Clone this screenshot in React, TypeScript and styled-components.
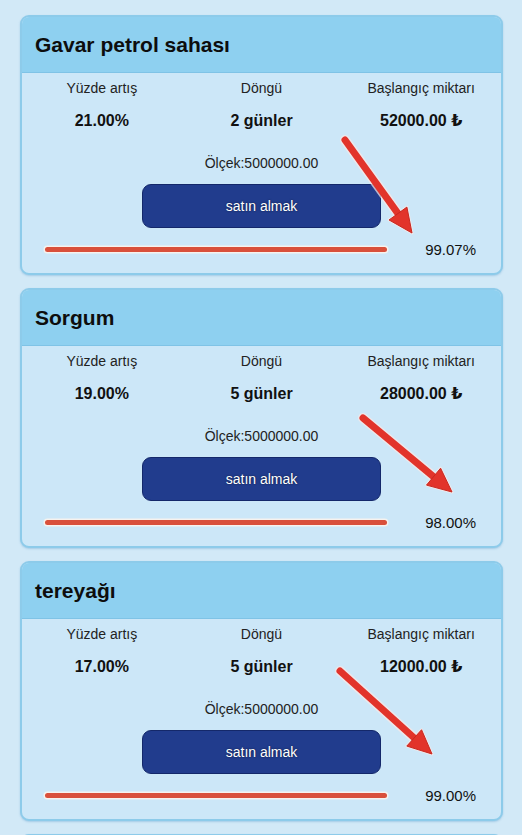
import React from "react";
import styled, { createGlobalStyle } from "styled-components";

const Global = createGlobalStyle`
  html, body { margin: 0; padding: 0; background: #d2e9f7; }
  body { font-family: "Liberation Sans", Arial, "DejaVu Sans", sans-serif; color: #111; }
`;

const Page = styled.div`
  display: flex;
  flex-direction: column;
  gap: 13px;
  padding: 15px 19px 0 20px;
  height: 835px;
  overflow: hidden;
  box-sizing: border-box;
`;

const Card = styled.section`
  position: relative;
  flex: none;
  border: 2px solid #8dcbea;
  border-radius: 9px;
  background: #cce7f8;
  overflow: hidden;
  box-shadow: 0 1px 2px rgba(80, 150, 200, 0.35);
`;

const Header = styled.header`
  height: 55px;
  display: flex;
  align-items: center;
  padding-left: 13px;
  background: #8ed0f0;
  border-bottom: 1px solid #7fc3e6;
`;

const Title = styled.h2`
  margin: 0;
  font-size: 21px;
  font-weight: 700;
  color: #0d0d0d;
`;

const Body = styled.div`
  display: flex;
  flex-direction: column;
  align-items: center;
  padding: 5px 0 14px;
`;

const Stats = styled.div`
  align-self: stretch;
  display: grid;
  grid-template-columns: repeat(3, 1fr);
  row-gap: 13px;
`;

const Label = styled.div`
  text-align: center;
  font-size: 14px;
  line-height: 20px;
  color: #222;
`;

const Value = styled.div`
  text-align: center;
  font-size: 16px;
  line-height: 20px;
  font-weight: 700;
  color: #111;
`;

const Scale = styled.div`
  margin-top: 23px;
  font-size: 14px;
  line-height: 18px;
  color: #222;
`;

const BuyButton = styled.button`
  margin-top: 12px;
  width: 239px;
  height: 44px;
  border: 1px solid #14286a;
  border-radius: 9px;
  background: #213c8d;
  color: #fff;
  font-family: inherit;
  font-size: 14px;
  text-shadow: 0 0 2px rgba(0, 0, 0, 0.6);
  cursor: pointer;
`;

const ProgressRow = styled.div`
  align-self: stretch;
  margin-top: 11px;
  height: 20px;
  display: flex;
  align-items: center;
  padding: 0 25px 0 23px;
`;

const Track = styled.div`
  width: 342px;
  height: 5px;
  border-radius: 3px;
  background: #d9503b;
  box-shadow: 0 0 0 1.5px #f6f2ee;
`;

const Percent = styled.span`
  margin-left: auto;
  font-size: 15px;
  color: #111;
`;

const Overlay = styled.svg`
  position: absolute;
  inset: 0;
  width: 100%;
  height: 100%;
  pointer-events: none;
`;

type Pt = [number, number];

function Arrow({ from, to }: { from: Pt; to: Pt }) {
  const [x1, y1] = from;
  const [x2, y2] = to;
  const dx = x2 - x1;
  const dy = y2 - y1;
  const len = Math.hypot(dx, dy);
  const ux = dx / len;
  const uy = dy / len;
  const headLen = 24;
  const headW = 11;
  const bx = x2 - ux * headLen;
  const by = y2 - uy * headLen;
  const px = -uy;
  const py = ux;
  const head = `${x2},${y2} ${bx + px * headW},${by + py * headW} ${bx - px * headW},${by - py * headW}`;
  return (
    <Overlay>
      <g stroke="#fbe9e6" strokeWidth={10} strokeLinecap="round" strokeLinejoin="round" fill="#fbe9e6" opacity={0.7}>
        <line x1={x1} y1={y1} x2={bx} y2={by} />
        <polygon points={head} strokeWidth={3} />
      </g>
      <line x1={x1} y1={y1} x2={bx + ux * 2} y2={by + uy * 2} stroke="#e2342b" strokeWidth={7} strokeLinecap="round" />
      <polygon points={head} fill="#e2342b" stroke="#c92820" strokeWidth={1} strokeLinejoin="round" />
    </Overlay>
  );
}

type Item = {
  title: string;
  rate: string;
  cycle: string;
  amount: string;
  percent: string;
  arrow: [Pt, Pt];
};

const items: Item[] = [
  { title: "Gavar petrol sahası", rate: "21.00%", cycle: "2 günler", amount: "52000.00 ₺", percent: "99.07%", arrow: [[323, 123], [390, 216]] },
  { title: "Sorgum", rate: "19.00%", cycle: "5 günler", amount: "28000.00 ₺", percent: "98.00%", arrow: [[341, 128], [430, 202]] },
  { title: "tereyağı", rate: "17.00%", cycle: "5 günler", amount: "12000.00 ₺", percent: "99.00%", arrow: [[318, 108], [410, 191]] },
];

function ProductCard({ item }: { item: Item }) {
  return (
    <Card>
      <Header>
        <Title>{item.title}</Title>
      </Header>
      <Body>
        <Stats>
          <Label>Yüzde artış</Label>
          <Label>Döngü</Label>
          <Label>Başlangıç miktarı</Label>
          <Value>{item.rate}</Value>
          <Value>{item.cycle}</Value>
          <Value>{item.amount}</Value>
        </Stats>
        <Scale>Ölçek:5000000.00</Scale>
        <BuyButton>satın almak</BuyButton>
        <ProgressRow>
          <Track />
          <Percent>{item.percent}</Percent>
        </ProgressRow>
      </Body>
      <Arrow from={item.arrow[0]} to={item.arrow[1]} />
    </Card>
  );
}

export default function App() {
  return (
    <>
      <Global />
      <Page>
        {items.map((it, i) => (
          <ProductCard key={i} item={it} />
        ))}
        <Card>
          <Header />
        </Card>
      </Page>
    </>
  );
}
